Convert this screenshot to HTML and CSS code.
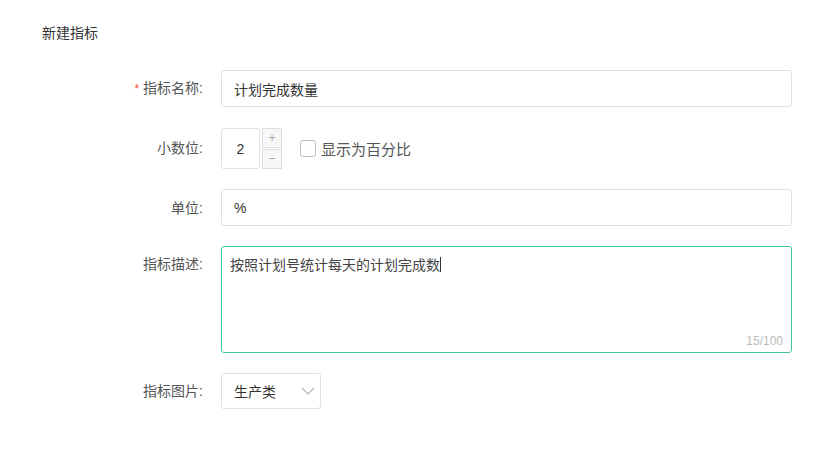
FILE: index.html
```html
<!DOCTYPE html>
<html lang="zh-CN">
<head>
    <meta charset="UTF-8">
    <title>新建指标</title>
    <link rel="stylesheet" href="styles.css">
</head>
<body>
    <div class="page">
        <h2 class="title">新建指标</h2>

        <form class="form">
            <label class="label"><span class="star">*</span>指标名称:</label>
            <input class="input" type="text" value="计划完成数量">

            <label class="label">小数位:</label>
            <div class="decimal-row">
                <div class="num-box">2</div>
                <div class="steps">
                    <span class="step">+</span>
                    <span class="step">−</span>
                </div>
                <label class="check"><span class="check-box"></span>显示为百分比</label>
            </div>

            <label class="label">单位:</label>
            <input class="input" type="text" value="%">

            <label class="label label-top">指标描述:</label>
            <div class="area-wrap">
                <div class="area">按照计划号统计每天的计划完成数<span class="caret"></span></div>
                <span class="count">15/100</span>
            </div>

            <label class="label">指标图片:</label>
            <div class="select">
                <span>生产类</span>
                <svg width="14" height="8" viewBox="0 0 14 8"><path d="M1 1 L7 7 L13 1" fill="none" stroke="#b4b4b4" stroke-width="1.2"/></svg>
            </div>
        </form>
    </div>
</body>
</html>
```

FILE: styles.css
```css
body { margin: 0; background: #fff; font-family: "Liberation Sans", "Noto Sans CJK SC", sans-serif; font-size: 14px; color: #333; }
.page { padding: 24px 0 0 42px; }
.title { margin: 0 0 28px; font-size: 14px; font-weight: normal; line-height: 18px; color: #333; }

.form { display: grid; grid-template-columns: 161px 571px; column-gap: 18px; row-gap: 20px; margin: 0; }
.label { align-self: center; text-align: right; color: #555; line-height: 20px; }
.label-top { align-self: start; line-height: 37px; }
.star { color: #f0504a; margin-right: 4px; font-size: 12px; }

.input { height: 37px; box-sizing: border-box; border: 1px solid #dcdfe6; border-radius: 3px; padding: 0 12px; font: inherit; color: #333; outline: none; }

.decimal-row { display: flex; align-items: center; height: 41px; margin-top: 1px; }
.num-box { width: 39px; height: 41px; box-sizing: border-box; border: 1px solid #dcdfe6; border-radius: 3px; display: flex; align-items: center; justify-content: center; color: #333; }
.steps { display: flex; flex-direction: column; gap: 1px; margin-left: 2px; }
.step { width: 20px; height: 20px; box-sizing: border-box; border: 1px solid #ddd; background: #f7f7f7; color: #aaa; font-size: 13px; line-height: 17px; text-align: center; }
.check { display: flex; align-items: center; margin-left: 18px; color: #555; font-size: 15px; }
.check-box { width: 16px; height: 17px; box-sizing: border-box; border: 1px solid #bbb; border-radius: 3px; margin-right: 5px; }

.area-wrap { position: relative; }
.area { height: 107px; box-sizing: border-box; border: 1px solid #3fcb98; border-radius: 3px; padding: 8px 8px; color: #444; line-height: 20px; }
.caret { display: inline-block; width: 1px; height: 15px; background: #333; vertical-align: -2px; }
.count { position: absolute; right: 9px; bottom: 5px; font-size: 12px; color: #bbb; }

.select { width: 100px; height: 36px; box-sizing: border-box; border: 1px solid #dcdfe6; border-radius: 3px; padding: 0 5px 0 12px; display: flex; align-items: center; justify-content: space-between; color: #333; }
```
